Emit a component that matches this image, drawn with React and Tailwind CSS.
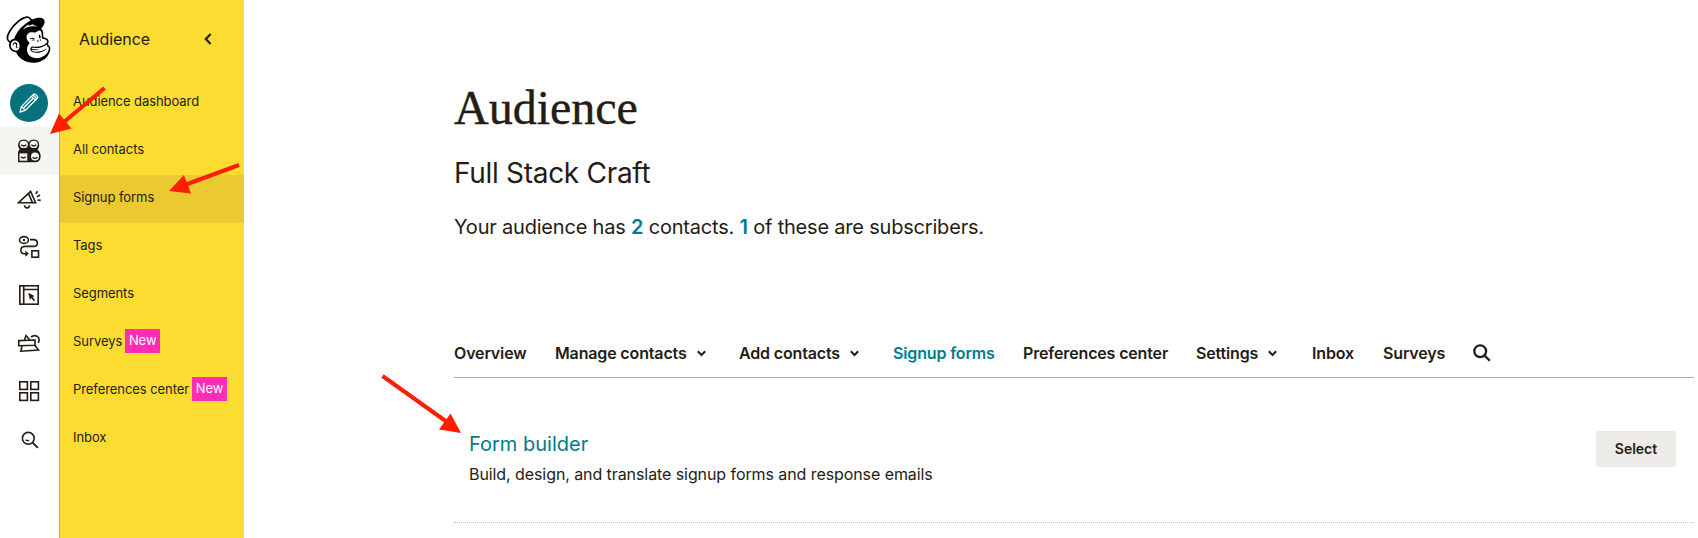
import React from "react";
import { FaMailchimp } from "react-icons/fa";

function Icon({ children }) {
  return (
    <svg width="24" height="24" viewBox="0 0 24 24" fill="none" stroke="#241c15" strokeWidth="1.6">
      {children}
    </svg>
  );
}

function PencilIcon() {
  return (
    <svg width="24" height="24" viewBox="0 0 24 24" fill="none" stroke="#fff" strokeWidth="1.3" strokeLinejoin="round">
      <path d="M3 21.2 L4.4 15.6 L16.4 3.4 Q17.4 2.5 18.4 3.4 L20.3 5.2 Q21.2 6.2 20.3 7.2 L8.3 19.4 Z" />
      <path d="M4.6 15.6 L8.3 19.2 M6.8 16.8 L16.6 6.8 M14.4 5.4 L18.3 9.2 M16 4 L19.8 7.8" />
    </svg>
  );
}

function ContactsIcon() {
  return (
    <Icon>
      <path d="M6.8 0.6 Q10 0.6 11.7 3 Q13.5 0.6 16.7 0.6 Q22.2 1 22.2 6 Q22.2 9 20.4 10.6 Q23.7 13.4 23.7 17.4 Q23.4 23 18 23.3 H1 V12.8 L2.6 10.4 Q1 8.6 1 6 Q1.4 1 6.8 0.6 Z" fill="#241c15" stroke="none" />
      <g fill="#f6f6f4" stroke="none">
        <ellipse cx="6.8" cy="5.4" rx="4.1" ry="3.6" />
        <ellipse cx="16.8" cy="5.4" rx="4" ry="3.6" />
        <rect x="2.5" y="14.4" width="7.8" height="7.3" />
        <circle cx="18" cy="17.6" r="4" />
      </g>
      <g strokeWidth="1.4">
        <path d="M4.2 5.8 Q6.7 8.2 9.3 5.8 M14.3 5.8 Q16.8 8.2 19.3 5.8 M4.1 17.8 Q6.4 20 8.7 17.8 M15.6 18.2 Q18 20.4 20.4 18.2" />
      </g>
    </Icon>
  );
}

function MegaphoneIcon() {
  return (
    <Icon>
      <path d="M1.3 15.8 L13.6 4.4 L18.6 15.8 Z M11.6 6.6 L15.4 15.6" />
      <path d="M7.6 18.2 Q7.8 20.9 10 20.9 Q12.3 20.9 12.5 18.2" />
      <path d="M18.8 6.8 L20.6 4.2 M19.9 9.9 L23 8 M20.5 13 L23.7 13.4" />
    </Icon>
  );
}

function JourneyIcon() {
  return (
    <Icon>
      <ellipse cx="7" cy="5" rx="4.5" ry="3.4" />
      <circle cx="7" cy="5" r="1.2" fill="#241c15" stroke="none" />
      <path d="M13 4.6 H16.4 Q20.4 4.8 20.4 8.3 Q20.4 11.4 16.6 11.4 H8.2 Q3.8 11.6 3.8 15.2 Q3.8 18.6 7.4 18.7 H10" />
      <path d="M8.4 15.6 L11.8 18.7 L8.4 21.8 Z" fill="#241c15" stroke="none" />
      <rect x="14.9" y="15.8" width="6.6" height="6.4" />
    </Icon>
  );
}

function LayoutIcon() {
  return (
    <Icon>
      <rect x="2.8" y="2.8" width="18.4" height="18.4" />
      <path d="M6.7 2.5 V21.5 M6.7 6.5 H21.5" />
      <path d="M11.2 9.8 L17.6 13 L15.6 14.1 L18 17.2 L16.7 18.2 L14.3 15.1 L13 16.9 Z" fill="#241c15" stroke="none" />
    </Icon>
  );
}

function SurveyIcon() {
  return (
    <Icon>
      <path d="M1.8 9.6 L18 9 V14.2 L1.8 14.7 Z" />
      <path d="M7.4 9 L9 4.6 L12.6 8.8 M14 6 Q17 3.7 20 5.2 Q23.4 7.4 21.3 11.8" />
      <path d="M5 14.9 L3.8 20.2 L21.5 19 L18 14.6" />
    </Icon>
  );
}

function AppsIcon() {
  return (
    <Icon>
      <rect x="2.8" y="2.8" width="7.6" height="7.6" />
      <rect x="13.8" y="2.8" width="7.6" height="7.6" />
      <rect x="2.8" y="13.8" width="7.6" height="7.6" />
      <rect x="13.8" y="13.8" width="7.6" height="7.6" />
    </Icon>
  );
}

function RailSearchIcon() {
  return (
    <Icon>
      <circle cx="11.3" cy="11.3" r="5.9" />
      <path d="M8.5 12.8 Q10 14.1 12.2 13.5" strokeWidth="1.3" />
      <path d="M15.6 15.6 L20.9 20.9" strokeWidth="1.9" />
    </Icon>
  );
}

const railIcons = [MegaphoneIcon, JourneyIcon, LayoutIcon, SurveyIcon, AppsIcon, RailSearchIcon];

const sideLinks = [
  { label: "Audience dashboard" },
  { label: "All contacts" },
  { label: "Signup forms", active: true },
  { label: "Tags" },
  { label: "Segments" },
  { label: "Surveys", isNew: true },
  { label: "Preferences center", isNew: true },
  { label: "Inbox" },
];

const tabs = [
  { label: "Overview", width: "w-[101px]" },
  { label: "Manage contacts", width: "w-[184px]", menu: true },
  { label: "Add contacts", width: "w-[154px]", menu: true },
  { label: "Signup forms", width: "w-[130px]", active: true },
  { label: "Preferences center", width: "w-[173px]" },
  { label: "Settings", width: "w-[116px]", menu: true },
  { label: "Inbox", width: "w-[71px]" },
  { label: "Surveys", width: "w-[90px]" },
];

function Rail() {
  return (
    <div className="flex w-[59px] shrink-0 flex-col items-center bg-white">
      <div className="flex h-[84px] w-full items-start justify-center pt-[13px] pr-[2px]">
        <FaMailchimp size={53} color="#000" className="shrink-0" />
      </div>
      <div className="flex h-[43px] w-full items-start justify-center pr-px">
        <div className="flex size-[38px] items-center justify-center rounded-full bg-[#07727e]">
          <PencilIcon />
        </div>
      </div>
      <div className="flex h-12 w-full items-center justify-center bg-[#f5f5f1] pr-px">
        <ContactsIcon />
      </div>
      {railIcons.map((RailIcon, i) => (
        <div key={i} className="flex h-12 w-full items-center justify-center pr-px">
          <RailIcon />
        </div>
      ))}
    </div>
  );
}

function Sidebar() {
  return (
    <aside className="w-[185px] shrink-0 border-l border-[#c9b02f] bg-[#fddc32]">
      <div className="flex h-[79px] items-center justify-between pr-[32px] pb-[2px] pl-[19px]">
        <span className="text-base tracking-[-0.05px]">Audience</span>
        <svg width="8" height="12" viewBox="0 0 8 12" fill="none" stroke="#241c15" strokeWidth="2.2">
          <path d="M6.6 1 L1.8 6 L6.6 11" />
        </svg>
      </div>
      {sideLinks.map((link) => (
        <div
          key={link.label}
          className={`flex h-12 items-center gap-[3px] pl-[13px] text-[13px] whitespace-nowrap tracking-[-0.07px] ${link.active ? "bg-[#eaca30]" : ""}`}
        >
          <span className="pb-[3px]">{link.label}</span>
          {link.isNew && (
            <span className="mb-1 flex h-6 w-[35px] items-center justify-center bg-[#ff2eb4] text-white">New</span>
          )}
        </div>
      ))}
    </aside>
  );
}

function Main() {
  return (
    <main className="flex-1 pr-1 pl-[210px]">
      <h1 className="mt-[78px] font-['Liberation_Serif',serif] text-[48px] leading-[60px] [-webkit-text-stroke:0.4px_#241c15]">
        Audience
      </h1>
      <h2 className="mt-[15px] text-[28px] leading-10 tracking-[-0.3px]">Full Stack Craft</h2>
      <p className="mt-[19px] text-xl leading-[30px] tracking-[-0.2px]">
        Your audience has <span className="font-semibold text-[#007c89]">2</span> contacts.{" "}
        <span className="font-semibold text-[#007c89]">1</span> of these are subscribers.
      </p>
      <nav className="mt-[86px] flex h-[50px] items-center border-b border-[#a9a9a9] pt-px">
        {tabs.map((tab) => (
          <div
            key={tab.label}
            className={`flex shrink-0 items-center gap-2.5 font-semibold whitespace-nowrap tracking-[-0.15px] ${tab.width} ${tab.active ? "text-[#007c89]" : ""}`}
          >
            {tab.label}
            {tab.menu && (
              <svg width="9" height="7" viewBox="0 0 9 7" fill="none" stroke="#241c15" strokeWidth="2">
                <path d="M0.8 1.2 L4.5 5 L8.2 1.2" />
              </svg>
            )}
          </div>
        ))}
        <svg width="18" height="18" viewBox="0 0 18 18" fill="none" stroke="#241c15" strokeWidth="2.3">
          <circle cx="7.2" cy="7.2" r="5.9" />
          <path d="M11.4 11.4 L16.8 16.8" />
        </svg>
      </nav>
      <section className="flex h-[145px] items-start justify-between border-b border-dotted border-[#c4c4c4] pr-[18px] pl-[15px]">
        <div className="pt-[51px]">
          <h3 className="text-xl leading-[30px] text-[#007c89]">Form builder</h3>
          <p className="text-base leading-[30px] tracking-[-0.08px]">
            Build, design, and translate signup forms and response emails
          </p>
        </div>
        <button className="mt-[53px] h-9 w-20 rounded-[2px] bg-[#ecebe8] text-sm font-semibold">Select</button>
      </section>
    </main>
  );
}

function Arrows() {
  return (
    <svg className="pointer-events-none absolute top-0 left-0" width="1698" height="538" viewBox="0 0 1698 538">
      <g stroke="#ff1e00" strokeWidth="4">
        <path d="M104.5 88 L64 122" />
        <path d="M239 165 L186 184.5" />
        <path d="M382.5 376 L447 422" />
      </g>
      <g fill="#ff1e00">
        <path d="M50 134 L59 113.5 L71.5 128.5 Z" />
        <path d="M169 191 L184 175 L191 193.5 Z" />
        <path d="M461 433 L450.5 413.5 L439 429.5 Z" />
      </g>
    </svg>
  );
}

export default function App() {
  return (
    <div className="relative flex h-[538px] w-full overflow-hidden bg-white font-['Inter',sans-serif] text-[#241c15]">
      <Rail />
      <Sidebar />
      <Main />
      <Arrows />
    </div>
  );
}
